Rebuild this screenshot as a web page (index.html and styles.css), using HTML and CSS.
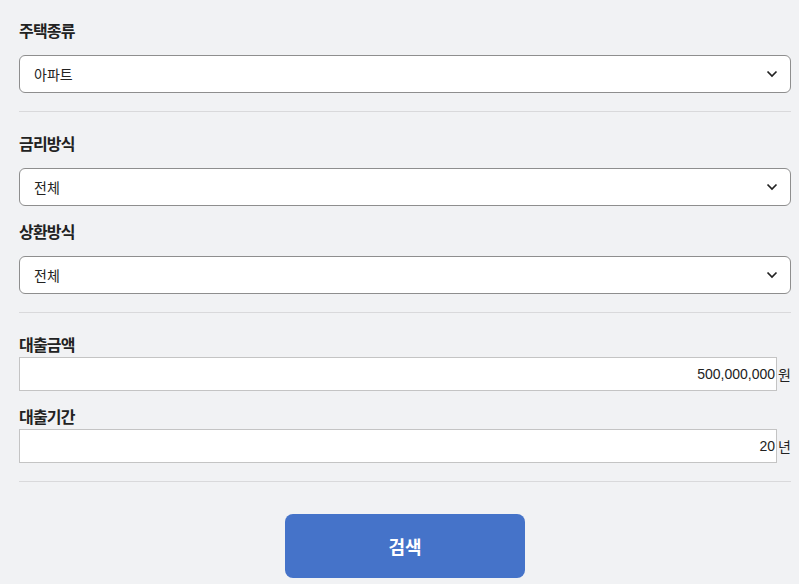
FILE: index.html
```html
<!DOCTYPE html>
<html lang="ko">
<head>
<meta charset="utf-8">
<link rel="stylesheet" href="styles.css">
</head>
<body>
<div class="form">
  <section class="group">
    <div class="label">주택종류</div>
    <div class="select"><span>아파트</span><svg class="chev" width="12" height="8" viewBox="0 0 12 8"><path d="M1.5 1.5 L6 6 L10.5 1.5" fill="none" stroke="#222" stroke-width="1.7"/></svg></div>
  </section>
  <hr class="divider">
  <section class="group">
    <div class="label">금리방식</div>
    <div class="select"><span>전체</span><svg class="chev" width="12" height="8" viewBox="0 0 12 8"><path d="M1.5 1.5 L6 6 L10.5 1.5" fill="none" stroke="#222" stroke-width="1.7"/></svg></div>
    <div class="label second">상환방식</div>
    <div class="select"><span>전체</span><svg class="chev" width="12" height="8" viewBox="0 0 12 8"><path d="M1.5 1.5 L6 6 L10.5 1.5" fill="none" stroke="#222" stroke-width="1.7"/></svg></div>
  </section>
  <hr class="divider">
  <section class="group">
    <div class="label tight">대출금액</div>
    <div class="inputrow"><div class="input">500,000,000</div><span class="unit">원</span></div>
    <div class="label tight second2">대출기간</div>
    <div class="inputrow"><div class="input">20</div><span class="unit">년</span></div>
  </section>
  <hr class="divider">
  <div class="actions"><button class="btn">검색</button></div>
</div>
</body>
</html>
```
FILE: styles.css
```css
html, body { margin: 0; padding: 0; }
body {
  background: #f1f2f4;
  font-family: "Noto Sans CJK KR", "Noto Sans", sans-serif;
  color: #222;
  width: 799px;
  height: 584px;
  overflow: hidden;
}
.form { padding: 19px 8px 0 19px; }
.group { display: flex; flex-direction: column; }
.label {
  font-size: 16px;
  font-weight: 700;
  letter-spacing: -0.8px;
  line-height: 22px;
  height: 22px;
  margin-bottom: 14px;
}
.label.second { margin-top: 14px; margin-bottom: 14px; }
.label.tight { margin-top: 20px; margin-bottom: 2px; }
.label.second2 { margin-top: 14px; }
.select {
  height: 36px;
  background: #fff;
  border: 1px solid #8e8e8e;
  border-radius: 6px;
  display: flex;
  align-items: center;
  justify-content: space-between;
  padding: 0 12px 0 14px;
  font-size: 14px;
}
.chev { display: block; }
.divider {
  border: 0;
  border-top: 1px solid #d9d9db;
  margin: 18px 0 0 0;
  height: 0;
}
.divider + .group .label:first-child { margin-top: 20px; }
.divider + .group .label.tight:first-child { margin-top: 20px; }
.inputrow { display: flex; align-items: center; }
.input {
  flex: 1;
  height: 32px;
  background: #fff;
  border: 1px solid #c4c4c4;
  text-align: right;
  font-family: "Liberation Sans", Arial, sans-serif;
  font-size: 14px;
  line-height: 32px;
  padding-right: 1px;
}
.unit { width: 14px; text-align: right; font-size: 14px; }
.actions { display: flex; justify-content: center; padding-top: 32px; }
.btn {
  width: 240px;
  height: 64px;
  background: #4573c9;
  color: #fff;
  border: 0;
  border-radius: 8px;
  font-family: "Noto Sans CJK KR", sans-serif;
  font-size: 18px;
  font-weight: 700;
}
```
